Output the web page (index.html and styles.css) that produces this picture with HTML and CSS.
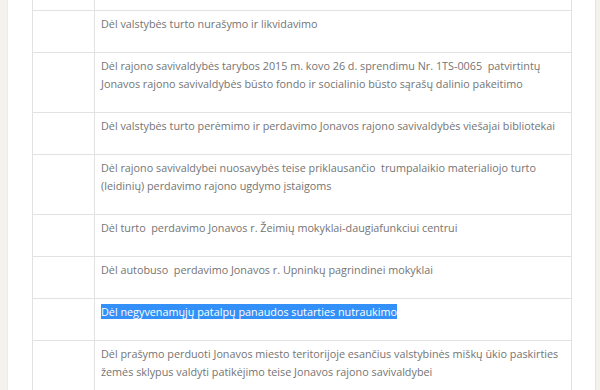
FILE: index.html
```html
<!DOCTYPE html>
<html lang="lt">
<head>
<meta charset="utf-8">
<title>Sprendimai</title>
<link rel="stylesheet" href="styles.css">
</head>
<body>
<div class="page">
  <div class="content">
    <table class="docs">
      <tr class="tail"><td class="num"></td><td class="title"></td></tr>
      <tr><td class="num"></td><td class="title">Dėl valstybės turto nurašymo ir likvidavimo</td></tr>
      <tr><td class="num"></td><td class="title">Dėl rajono savivaldybės tarybos 2015 m. kovo 26 d. sprendimu Nr. 1TS-0065&nbsp; patvirtintų Jonavos rajono savivaldybės būsto fondo ir socialinio būsto sąrašų dalinio pakeitimo</td></tr>
      <tr><td class="num"></td><td class="title">Dėl valstybės turto perėmimo ir perdavimo Jonavos rajono savivaldybės viešajai bibliotekai</td></tr>
      <tr><td class="num"></td><td class="title">Dėl rajono savivaldybei nuosavybės teise priklausančio&nbsp; trumpalaikio materialiojo turto (leidinių) perdavimo rajono ugdymo įstaigoms</td></tr>
      <tr><td class="num"></td><td class="title">Dėl turto&nbsp; perdavimo Jonavos r. Žeimių mokyklai-daugiafunkciui centrui</td></tr>
      <tr><td class="num"></td><td class="title">Dėl autobuso&nbsp; perdavimo Jonavos r. Upninkų pagrindinei mokyklai</td></tr>
      <tr><td class="num"></td><td class="title"><span class="selected">Dėl negyvenamųjų patalpų panaudos sutarties nutraukimo</span></td></tr>
      <tr><td class="num"></td><td class="title">Dėl prašymo perduoti Jonavos miesto teritorijoje esančius valstybinės miškų ūkio paskirties žemės sklypus valdyti patikėjimo teise Jonavos rajono savivaldybei</td></tr>
    </table>
  </div>
</div>
</body>
</html>
```

FILE: styles.css
```css
html, body {
  margin: 0;
  padding: 0;
  background: #f4f2ec;
  overflow: hidden;
}

.page {
  margin-left: 7px;
  width: 587px;
  height: 390px;
  background: #ffffff;
  border-left: 1px solid #ecebe6;
  border-right: 1px solid #e4e3df;
  overflow: hidden;
}

.content {
  padding-left: 24px;
}

.docs {
  width: 540px;
  border-collapse: collapse;
  font-family: "Open Sans", "Noto Sans", sans-serif;
  font-size: 10.8px;
  line-height: 18px;
  color: #747474;
}

.docs td {
  border: 1px solid #e2e2e2;
  vertical-align: top;
  padding: 4px 6px 19px 6px;
}

.docs .num {
  width: 49px;
}

.docs .tail td {
  border-top: none;
  height: 10px;
  padding: 0;
}

.selected {
  background: #3390f8;
  color: #ffffff;
}
```
